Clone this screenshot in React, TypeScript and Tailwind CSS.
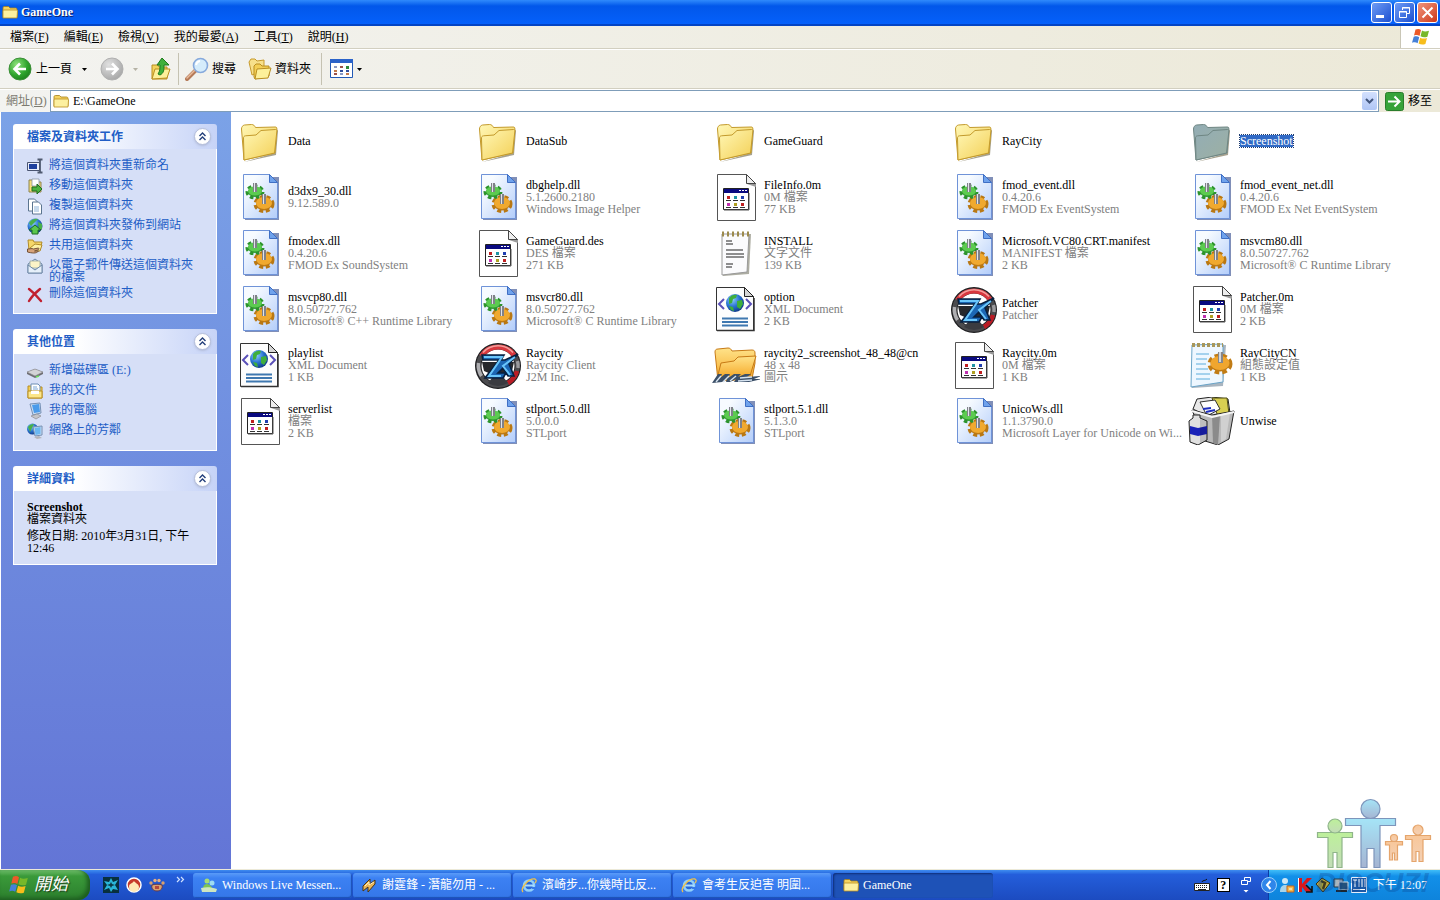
import React, { useState } from 'react'

type IconKind =
  | 'folder'
  | 'folder-selected'
  | 'dll'
  | 'generic'
  | 'notepad'
  | 'xml'
  | 'wheel'
  | 'screenshot-icon'
  | 'config'
  | 'unwise'

interface FileEntry {
  name: string
  icon: IconKind
  details?: string[]
}

const files: FileEntry[] = [
  { name: 'Data', icon: 'folder' },
  { name: 'DataSub', icon: 'folder' },
  { name: 'GameGuard', icon: 'folder' },
  { name: 'RayCity', icon: 'folder' },
  { name: 'Screenshot', icon: 'folder-selected' },
  { name: 'd3dx9_30.dll', icon: 'dll', details: ['9.12.589.0'] },
  { name: 'dbghelp.dll', icon: 'dll', details: ['5.1.2600.2180', 'Windows Image Helper'] },
  { name: 'FileInfo.0m', icon: 'generic', details: ['0M 檔案', '77 KB'] },
  { name: 'fmod_event.dll', icon: 'dll', details: ['0.4.20.6', 'FMOD Ex EventSystem'] },
  { name: 'fmod_event_net.dll', icon: 'dll', details: ['0.4.20.6', 'FMOD Ex Net EventSystem'] },
  { name: 'fmodex.dll', icon: 'dll', details: ['0.4.20.6', 'FMOD Ex SoundSystem'] },
  { name: 'GameGuard.des', icon: 'generic', details: ['DES 檔案', '271 KB'] },
  { name: 'INSTALL', icon: 'notepad', details: ['文字文件', '139 KB'] },
  { name: 'Microsoft.VC80.CRT.manifest', icon: 'dll', details: ['MANIFEST 檔案', '2 KB'] },
  { name: 'msvcm80.dll', icon: 'dll', details: ['8.0.50727.762', 'Microsoft® C Runtime Library'] },
  { name: 'msvcp80.dll', icon: 'dll', details: ['8.0.50727.762', 'Microsoft® C++ Runtime Library'] },
  { name: 'msvcr80.dll', icon: 'dll', details: ['8.0.50727.762', 'Microsoft® C Runtime Library'] },
  { name: 'option', icon: 'xml', details: ['XML Document', '2 KB'] },
  { name: 'Patcher', icon: 'wheel', details: ['Patcher'] },
  { name: 'Patcher.0m', icon: 'generic', details: ['0M 檔案', '2 KB'] },
  { name: 'playlist', icon: 'xml', details: ['XML Document', '1 KB'] },
  { name: 'Raycity', icon: 'wheel', details: ['Raycity Client', 'J2M Inc.'] },
  { name: 'raycity2_screenshot_48_48@cn', icon: 'screenshot-icon', details: ['48 x 48', '圖示'] },
  { name: 'Raycity.0m', icon: 'generic', details: ['0M 檔案', '1 KB'] },
  { name: 'RayCityCN', icon: 'config', details: ['組態設定值', '1 KB'] },
  { name: 'serverlist', icon: 'generic', details: ['檔案', '2 KB'] },
  { name: 'stlport.5.0.dll', icon: 'dll', details: ['5.0.0.0', 'STLport'] },
  { name: 'stlport.5.1.dll', icon: 'dll', details: ['5.1.3.0', 'STLport'] },
  { name: 'UnicoWs.dll', icon: 'dll', details: ['1.1.3790.0', 'Microsoft Layer for Unicode on Wi...'] },
  { name: 'Unwise', icon: 'unwise' }
]

const menus = [
  { label: '檔案', hotkey: 'F' },
  { label: '編輯', hotkey: 'E' },
  { label: '檢視', hotkey: 'V' },
  { label: '我的最愛', hotkey: 'A' },
  { label: '工具', hotkey: 'T' },
  { label: '說明', hotkey: 'H' }
]

// Gradients shared by every icon on the page
function IconDefs() {
  return (
    <svg className="absolute h-0 w-0" aria-hidden="true">
      <defs>
        <linearGradient id="folder" x1="0" y1="0" x2="1" y2="1">
          <stop offset="0" stopColor="#fff7b5" />
          <stop offset="1" stopColor="#f3cf55" />
        </linearGradient>
        <linearGradient id="folderSel" x1="0" y1="0" x2="1" y2="1">
          <stop offset="0" stopColor="#93adb5" />
          <stop offset="1" stopColor="#9db0a2" />
        </linearGradient>
        <linearGradient id="dllPage" x1="0" y1="0" x2="1" y2="1">
          <stop offset="0.2" stopColor="#f7fbff" />
          <stop offset="1" stopColor="#b3cdfa" />
        </linearGradient>
        <linearGradient id="orange" x1="0" y1="0" x2="0" y2="1">
          <stop offset="0" stopColor="#ffe38a" />
          <stop offset="1" stopColor="#f5a623" />
        </linearGradient>
        <radialGradient id="globe" cx="0.35" cy="0.3" r="0.8">
          <stop offset="0" stopColor="#8fd0ff" />
          <stop offset="0.5" stopColor="#2a74d0" />
          <stop offset="1" stopColor="#0b2f7a" />
        </radialGradient>
        <radialGradient id="greenBall" cx="0.35" cy="0.3" r="0.8">
          <stop offset="0" stopColor="#8fe27c" />
          <stop offset="0.6" stopColor="#2fa52d" />
          <stop offset="1" stopColor="#1b7c1b" />
        </radialGradient>
        <radialGradient id="greyBall" cx="0.35" cy="0.3" r="0.8">
          <stop offset="0" stopColor="#e0e0e0" />
          <stop offset="1" stopColor="#a3a3a3" />
        </radialGradient>
        <linearGradient id="personBlue" x1="0" y1="0" x2="0" y2="1">
          <stop offset="0" stopColor="#a5e4f7" />
          <stop offset="1" stopColor="#a5b4d2" />
        </linearGradient>
        <linearGradient id="personGreen" x1="0" y1="0" x2="0" y2="1">
          <stop offset="0" stopColor="#bdf09a" />
          <stop offset="1" stopColor="#c3dcb8" />
        </linearGradient>
        <linearGradient id="personOrange" x1="0" y1="0" x2="0" y2="1">
          <stop offset="0" stopColor="#f8c79a" />
          <stop offset="1" stopColor="#f3d0b5" />
        </linearGradient>
      </defs>
    </svg>
  )
}

function Gears() {
  return (
    <g>
      <ellipse cx="19" cy="19" rx="7" ry="5" fill="#2f9a30" />
      <ellipse cx="19" cy="19" rx="7" ry="5" fill="none" stroke="#2c932d" strokeWidth="5" strokeDasharray="3.200 2.200" />
      <ellipse cx="19" cy="18" rx="7" ry="4.500" fill="#5ccb50" />
      <ellipse cx="28" cy="31" rx="8" ry="6.500" fill="#c07c16" />
      <ellipse cx="28" cy="31" rx="8" ry="6.500" fill="none" stroke="#b97813" strokeWidth="5" strokeDasharray="3.600 2.400" />
      <ellipse cx="28" cy="30" rx="8" ry="6" fill="#f0a92f" />
      <path d="M17 10h4v9h-4zM26 21h4v10h-4z" fill="#7f8188" />
      <path d="M18 10h1v9h-1zM27 21h1v10h-1z" fill="#e2e4ea" />
    </g>
  )
}

function FolderShape({ fill, stroke }: { fill: string; stroke: string }) {
  return (
    <g strokeLinejoin="round">
      <path d="M8 45 40 38l2-24-1-2-2 24z" fill="#6b6242" opacity="0.6" />
      <path d="M5.500 12c0-2 1-3.500 3-4l7-.5c2 0 3 1 4 3L39 10c1.500 0 2 .5 1.800 2L39 36 8 43z" fill={fill} stroke={stroke} />
      <path d="M8 43 7.500 21c0-1 .5-2 2-2.200L20 18l5-4.500 14.500-1c1 0 1.500.5 1.400 1.500L38.500 36z" fill={fill} stroke={stroke} />
    </g>
  )
}

function FileIcon({ kind }: { kind: IconKind }) {
  return (
    <svg viewBox="0 0 48 48" className="h-12 w-12 shrink-0" aria-hidden="true">
      {kind === 'folder' && <FolderShape fill="url(#folder)" stroke="#c39a2c" />}
      {kind === 'folder-selected' && <FolderShape fill="url(#folderSel)" stroke="#6f8683" />}
      {kind === 'dll' && (
        <g>
          <path d="M9 4h34v43H9z" fill="#4a5f9a" opacity="0.7" />
          <path d="M7.500 1.500h26l8 8v36h-34z" fill="url(#dllPage)" stroke="#6f93d8" />
          <path d="M33.500 1.500v8h8z" fill="#6fa2ec" stroke="#3f6fc4" />
          <Gears />
        </g>
      )}
      {kind === 'generic' && (
        <g>
          <path d="M5.500 1.500h29l9 9v37h-38z" fill="#fff" stroke="#555" />
          <path d="M34.500 1.500v9h9z" fill="#eee" stroke="#444" />
          <path d="M35 11h9v3z" fill="#999" />
          <path d="M11.500 15.500h25v21h-25z" fill="#fff" stroke="#222" />
          <path d="M12 16h24v4H12z" fill="#0a0a80" />
          <path d="M27 17h2v1h-2zM30 17h2v1h-2zM33 17h2v1h-2z" fill="#fff" />
          <path d="M12 37h25v-17" fill="none" stroke="#555" />
          <path d="M15 23h3v3h-3z" fill="#c02020" />
          <path d="M22 23h3v3h-3z" fill="#1f95a5" />
          <path d="M29 23h3v3h-3z" fill="#203fb0" />
          <path d="M15 30h3v3h-3z" fill="#c030b0" />
          <path d="M22 30h3v3h-3z" fill="#b0a020" />
          <path d="M29 30h3v3h-3z" fill="#c02020" />
          <path d="M14 27.500h5M21 27.500h5M28 27.500h5M14 34.500h5M21 34.500h5M28 34.500h5" stroke="#333" />
        </g>
      )}
      {kind === 'notepad' && (
        <g>
          <path d="m11 6 28-1-2 40-26 2z" fill="#8a8a7a" opacity="0.7" />
          <path d="M10 5h27l-2 38-25 3z" fill="#fbfbfd" stroke="#9a9a9a" />
          <path d="M10 5h27" stroke="#9c8a4c" strokeWidth="5" strokeDasharray="2 3" />
          <path d="M14 12h6M14 15h7M14 21h17M14 25h18M14 28h18M14 35h7M14 38h6" stroke="#222" strokeWidth="1.200" />
        </g>
      )}
      {kind === 'xml' && (
        <g>
          <path d="M4.500 2.500h28l9 9v34h-37z" fill="#fdfdfd" stroke="#333" />
          <path d="M32.500 2.500v9h9z" fill="#d5d5d5" stroke="#222" />
          <path d="M5 45.500h37V13" fill="none" stroke="#333" strokeWidth="1.500" />
          <circle cx="23" cy="18" r="9" fill="url(#globe)" />
          <path d="M17 13c2-3 6-4 8-3l-1 3-3 1-1 4-3 1zM25 16l5-1 1 4-3 5-3-2zM17 21l4 1 1 4-3-1z" fill="#3fae3c" />
          <path d="m12 14-5 5 5 5M34 14l5 5-5 5" fill="none" stroke="#5a50b8" strokeWidth="2" />
          <path d="M10 33.500h26M10 37h26M10 40.500h26" stroke="#3f78b0" strokeWidth="2" />
        </g>
      )}
      {kind === 'wheel' && (
        <g>
          <circle cx="24" cy="25" r="23" fill="#1c1c1e" />
          <circle cx="24" cy="25" r="16.500" fill="#fff" />
          <circle cx="24" cy="25" r="19.500" fill="none" stroke="#4b4b4e" strokeWidth="4.500" />
          <path d="M7.500 15a19.500 19.500 0 0 1 33 0" fill="none" stroke="#d8383e" strokeWidth="5" />
          <path d="M9 11.500a20 20 0 0 1 30 0" fill="none" stroke="#f3a09c" strokeWidth="1.500" />
          <path d="M43 30a19.500 19.500 0 0 1-9 12" fill="none" stroke="#bb1c25" strokeWidth="4.500" />
          <path d="M4.500 22a19.500 19.500 0 0 0 3 13" fill="none" stroke="#aeaeb1" strokeWidth="3.500" />
          <path d="M43.500 20a19.500 19.500 0 0 1 .5 7" fill="none" stroke="#9a9a9d" strokeWidth="3.500" />
          <path d="M8 21h32l-2 9-7 3-2 9H19l-2-9-7-3z" fill="#26282c" />
          <path d="M14 42a20 20 0 0 0 20 0l-4-5H18z" fill="#3a3b40" />
          <path d="M8 14h22l-3 5h4l13-6-9 10 5 12h-6l-5-8-5 5h8l-3 5H11l14-18H9z" fill="#1c67b4" stroke="#07203f" strokeWidth="1.600" />
          <path d="M10 16h18L15 35h12M41 16 29 25l7 9" fill="none" stroke="#6ac6fa" strokeWidth="2" />
        </g>
      )}
      {kind === 'screenshot-icon' && (
        <g strokeLinejoin="round">
          <path d="M3 11c0-2 1-3 3-3l10-1c2 0 3 1 4 3l20-1c2 0 3 1 3 3v10L40 38 6 40z" fill="url(#orange)" stroke="#c77a15" />
          <path d="m5 38 4-16 13-2 4-4 18-1-6 20z" fill="url(#orange)" stroke="#c77a15" />
          <path d="m0 42 6-9h4l-2 4 5-4h5l-2 4 6-4h7l-3 3 7-3h6l-4 3 14-1-7 3h8l-13 3H22l2-3-6 3h-4l1-3-5 3z" fill="#3b4f68" />
          <path d="m4 41 5-6M11 41l6-6M18 40l6-5M28 37l12-1M26 40l14-1" stroke="#d5e2ef" strokeWidth="1.400" />
        </g>
      )}
      {kind === 'config' && (
        <g>
          <path d="m4 5 34-1-3 41-31 2z" fill="#6f8496" opacity="0.6" />
          <path d="m4 4 31-1v38L3 46z" fill="#eef7ff" stroke="#6aa4c8" />
          <path d="M4 4h31" stroke="#a8975a" strokeWidth="4" strokeDasharray="3 2" />
          <path d="M8 13h13M8 18h11M8 23h10M8 28h12M8 33h14M8 38h14" stroke="#5bacdc" />
          <ellipse cx="32" cy="23" rx="9.500" ry="7.500" fill="#bf7a14" />
          <ellipse cx="32" cy="23" rx="9.500" ry="7.500" fill="none" stroke="#c17c15" strokeWidth="6" strokeDasharray="4.200 2.800" />
          <ellipse cx="32" cy="22" rx="9.500" ry="7" fill="#f0a62f" />
          <path d="M30 11h5v11h-5z" fill="#85878c" />
          <path d="M31 11h2v10h-2z" fill="#d5d7dc" />
        </g>
      )}
      {kind === 'unwise' && (
        <g strokeLinejoin="round">
          <path d="m5 12 4-10 15-2 16 2 2 14-17 6z" fill="#e8e8e8" stroke="#222" />
          <path d="M24 1h15l2 16-11 3z" fill="#d8cf52" stroke="#4d4a10" />
          <path d="m12 5 15-2 5 9-13 7z" fill="#fff" stroke="#333" />
          <path d="m15 12 8-1M18 15l9-2" stroke="#2030c0" strokeWidth="2" />
          <path d="m4 13 20 5 22-4-5 28-11 6-13-4z" fill="#b9b9b9" stroke="#222" />
          <path d="m24 18 1 28 5 2 2-30z" fill="#8b8b8b" />
          <path d="m33 18 9-2-4 26-5 3z" fill="#d0d0d0" />
          <path d="m4 14 20 6 22-5" fill="none" stroke="#f6f6f6" strokeWidth="2" />
          <path d="m1 24 4-3v-3h7v3l7 3v19l-9 5-8-3z" fill="#e0e0e0" stroke="#222" />
          <path d="m2 29 8 2 9-2v8l-9 2-8-2z" fill="#1a22b8" />
          <path d="M12 22v25l7-4V24z" fill="#000" opacity="0.15" />
        </g>
      )}
    </svg>
  )
}

function SmallFolder() {
  return (
    <svg viewBox="0 0 16 16" className="h-4 w-4 shrink-0" aria-hidden="true">
      <path d="M1 4c0-1 .5-1.500 1.500-1.500h4L8 4h5.500c.8 0 1.500.5 1.500 1.500V13H1z" fill="#f5d360" stroke="#a47d17" strokeWidth="0.800" />
      <path d="M1 14V7c0-.6.400-1 1-1h12.500c.6 0 1 .4 1 1L15 14z" fill="#fdf0a0" stroke="#b98e20" strokeWidth="0.800" />
    </svg>
  )
}

function WindowsFlag({ className }: { className: string }) {
  return (
    <svg viewBox="0 0 20 18" className={className} aria-hidden="true">
      <path d="M4.500 1.500C7 .5 8.500.8 10 2L8.500 8C7 7 5.500 6.800 3 7.600z" fill="#ec5a29" />
      <path d="M11 2.500c2 1.200 4 1.200 7 .2l-1.600 6c-2.600 1-4.600.8-6.900-.4z" fill="#77b82a" />
      <path d="M2.700 8.800C5 8 6.800 8.200 8.200 9.200l-1.600 6C5 14.200 3.500 14 1 14.800z" fill="#4580d8" />
      <path d="M9.200 9.700c2 1.100 4.200 1.200 6.800.3l-1.600 6c-2.600.9-4.700.7-6.800-.5z" fill="#f7bd1b" />
    </svg>
  )
}

function DownArrow({ className }: { className: string }) {
  return (
    <svg viewBox="0 0 5 3" className={className} aria-hidden="true">
      <path d="M0 0h5L2.500 3z" fill="currentColor" />
    </svg>
  )
}

function TitleBar() {
  return (
    <header className="flex h-[26px] items-center bg-linear-to-b from-[#2f8afc] via-[#0257ea] via-25% to-[#0560fb] border-b-2 border-[#0344c4] pl-[2px] pr-[2px]">
      <SmallFolder />
      <h1 className="ml-[3px] flex-1 text-[12px] leading-4 font-bold text-white [text-shadow:1px_1px_0_#0a1f66]">GameOne</h1>
      <div className="flex gap-[2px]">
        <button aria-label="最小化" className="h-[21px] w-[21px] rounded-[3px] border border-white bg-linear-to-br from-[#6f9bf5] to-[#1c4fd0]">
          <svg viewBox="0 0 19 19" className="h-full w-full">
            <path d="M4 12h8v3H4z" fill="#fff" />
          </svg>
        </button>
        <button aria-label="還原" className="h-[21px] w-[21px] rounded-[3px] border border-white bg-linear-to-br from-[#6f9bf5] to-[#1c4fd0]">
          <svg viewBox="0 0 19 19" className="h-full w-full" fill="none" stroke="#fff">
            <path d="M7.500 7V4.500h7v6H12M7 5h8" />
            <path d="M4.500 8.500h7v6h-7zM4 9h8" />
          </svg>
        </button>
        <button aria-label="關閉" className="h-[21px] w-[21px] rounded-[3px] border border-white bg-linear-to-br from-[#f0937a] to-[#cc3512]">
          <svg viewBox="0 0 19 19" className="h-full w-full" stroke="#fff" strokeWidth="2">
            <path d="m4.500 4.500 10 10M14.500 4.500l-10 10" />
          </svg>
        </button>
      </div>
    </header>
  )
}

function MenuBar() {
  return (
    <div className="flex h-[23px] items-stretch border-b border-[#d2cfc0]">
      <nav className="flex flex-1 items-center gap-[15px] pl-[10px]">
        {menus.map((menu) => (
          <button key={menu.hotkey} className="text-[12px] leading-4">
            {menu.label}(<u>{menu.hotkey}</u>)
          </button>
        ))}
      </nav>
      <div className="flex w-10 items-center justify-center border-l border-[#c9c6b6] bg-white">
        <WindowsFlag className="h-[18px] w-5" />
      </div>
    </div>
  )
}

function ToolBar() {
  return (
    <div className="flex h-10 items-center border-t border-b border-t-white border-b-[#d2cfc0] pl-2 text-[12px] leading-4">
      <button className="flex items-center gap-1">
        <svg viewBox="0 0 24 24" className="h-6 w-6">
          <circle cx="12" cy="12" r="11" fill="url(#greenBall)" stroke="#3c8f38" />
          <path d="M18 12H7M12 6.500 6.500 12l5.500 5.500" fill="none" stroke="#fff" strokeWidth="2.600" />
        </svg>
        上一頁
      </button>
      <button aria-label="上一頁清單" className="ml-[9px] p-px">
        <DownArrow className="h-[3px] w-[5px]" />
      </button>
      <button aria-label="下一頁" className="ml-3">
        <svg viewBox="0 0 24 24" className="h-6 w-6">
          <circle cx="12" cy="12" r="11" fill="url(#greyBall)" stroke="#b0b0b0" />
          <path d="M6 12h11M12 6.500l5.500 5.500-5.500 5.500" fill="none" stroke="#fff" strokeWidth="2.600" />
        </svg>
      </button>
      <button aria-label="下一頁清單" className="ml-2 p-px text-[#b5b2a5]">
        <DownArrow className="h-[3px] w-[5px]" />
      </button>
      <button aria-label="上移一層" className="ml-[10px]">
        <svg viewBox="0 0 24 24" className="h-6 w-6">
          <path d="M3 8h6l1 2h8v12H3z" fill="#f3d25c" stroke="#b98e20" />
          <path d="m3 22 3-10h15l-3 9z" fill="#fdf09a" stroke="#b98e20" />
          <path d="M11 18c4-2 4-5 4-10h5L13 1 8 8h3c0 4 0 6-2 9z" fill="#3fb03a" stroke="#1c7a1c" />
        </svg>
      </button>
      <div className="ml-[5px] h-8 w-px bg-[#c5c2b2]" />
      <button className="ml-[6px] flex items-center gap-[3px]">
        <svg viewBox="0 0 24 24" className="h-6 w-6">
          <path d="m11 13-9 9" stroke="#b57a58" strokeWidth="4" strokeLinecap="round" />
          <path d="m10 13-8 8" stroke="#e9bb9b" strokeWidth="1.500" strokeLinecap="round" />
          <circle cx="15.500" cy="8.500" r="7" fill="#d5ecfb" stroke="#86a9dc" strokeWidth="1.600" />
          <path d="M11 8a5 5 0 0 1 4-4" fill="none" stroke="#fff" strokeWidth="2" />
        </svg>
        搜尋
      </button>
      <button className="ml-3 flex items-center gap-[3px]">
        <svg viewBox="0 0 24 24" className="h-6 w-6" strokeLinejoin="round">
          <path d="M1 5 3 2h4l2 2 7-1v10L4 18z" fill="#f7e08a" stroke="#c79a2b" />
          <path d="M6 20V9l2-2h4l2 2h7v10L7 22z" fill="#f3cf55" stroke="#b98e20" />
          <path d="m7 22 2-10 14-1-3 10z" fill="#fdf09a" stroke="#b98e20" />
        </svg>
        資料夾
      </button>
      <div className="ml-[10px] h-8 w-px bg-[#c5c2b2]" />
      <button aria-label="檢視方式" className="ml-2 flex items-center gap-[3px]">
        <svg viewBox="0 0 24 20" className="h-5 w-6">
          <path d="M.5.500h22v18H.5z" fill="#fff" stroke="#2259b5" />
          <path d="M0 0h23v4H0z" fill="#2a63c9" />
          <path d="M4 7h3v2H4zM10 14h3v2h-3z" fill="#8a9ac4" />
          <path d="M10 7h3v2h-3zM4 14h3v2H4z" fill="#9c5148" />
          <path d="M16 7h3v3h-3z" fill="#2f8a38" />
          <path d="M4 11h3v2H4zM16 14h3v2h-3z" fill="#c27a4a" />
          <path d="M10 11h3v2h-3zM16 11h3v2h-3z" fill="#334f9c" />
        </svg>
        <DownArrow className="h-[3px] w-[5px]" />
      </button>
    </div>
  )
}

function AddressBar() {
  const [path, setPath] = useState('E:\\GameOne')

  return (
    <div className="flex h-[23px] items-center border-t border-white text-[12px] leading-4">
      <label htmlFor="address" className="w-[50px] pl-[6px] text-[#7d7b70]">
        網址(<u>D</u>)
      </label>
      <div className="flex h-[22px] flex-1 items-center border border-[#7f9db9] bg-white pl-[2px] pr-px">
        <SmallFolder />
        <input
          id="address"
          value={path}
          onChange={(e) => setPath(e.target.value)}
          className="ml-1 min-w-0 flex-1 bg-transparent outline-none"
        />
        <button aria-label="網址清單" className="flex h-[18px] w-[15px] items-center justify-center rounded-[2px] bg-linear-to-b from-[#d3e0fd] to-[#b0c6f5]">
          <svg viewBox="0 0 9 6" className="h-[6px] w-[9px]" fill="none" stroke="#42567d" strokeWidth="2">
            <path d="m1 1 3.500 3.500L8 1" />
          </svg>
        </button>
      </div>
      <button className="ml-[6px] mr-2 flex items-center gap-1">
        <svg viewBox="0 0 19 19" className="h-[19px] w-[19px]">
          <path d="M.5 2.500q0-2 2-2h14q2 0 2 2v14q0 2-2 2h-14q-2 0-2-2z" fill="#36a339" stroke="#2a7d2c" />
          <path d="M3 9.500h11M9.500 4.500l5 5-5 5" fill="none" stroke="#fff" strokeWidth="2" />
        </svg>
        移至
      </button>
    </div>
  )
}

interface TaskItem {
  label: string
  icon: React.ReactNode
}

const folderTasks: TaskItem[] = [
  {
    label: '將這個資料夾重新命名',
    icon: (
      <g>
        <path d="M.5 5.500h12v8H.5z" fill="#e9eefb" stroke="#4a5572" />
        <path d="M2 7h8v5H2z" fill="#1d3f9d" />
        <path d="M10.500 2.500h5M13 2.500v13M10.500 15.500h5" stroke="#4f5a70" strokeWidth="1.800" />
      </g>
    )
  },
  {
    label: '移動這個資料夾',
    icon: (
      <g>
        <path d="M2 3h5l1 2h6v10H2z" fill="#f3dc7a" stroke="#8d8451" />
        <path d="M5 2h7v7H5z" fill="#fff" stroke="#8b96a5" strokeWidth="0.800" />
        <path d="M5 10h5V7l5 5-5 5v-3H5z" fill="#4cb23e" stroke="#216d20" />
      </g>
    )
  },
  {
    label: '複製這個資料夾',
    icon: (
      <g fill="#fff" stroke="#5b7590">
        <path d="M1.500 2h6l3 3v9h-9z" />
        <path d="M5.500 5h6l3 3v9h-9z" />
        <path d="M7 10h5M7 12h5M7 14h5" stroke="#90b4d8" />
      </g>
    )
  },
  {
    label: '將這個資料夾發佈到網站',
    icon: (
      <g>
        <circle cx="8" cy="9" r="7.500" fill="url(#globe)" />
        <path d="M2 6c2-4 7-5 9-4l-3 3-4 4zM11 5l4 2v5l-3 1z" fill="#49b04a" />
        <path d="m8 8 6 5h-3v4H5v-4H2z" fill="#5ac74c" stroke="#1f6b24" />
      </g>
    )
  },
  {
    label: '共用這個資料夾',
    icon: (
      <g>
        <path d="M1 3h5l1 2h8l-2 8H2z" fill="#f5d76a" stroke="#b08a28" />
        <path d="m3 11 5-4 7 1-2 6H3z" fill="#fdf1a5" stroke="#b08a28" />
        <path d="M.5 12c3 0 4-1 6 0l5-1c1 1 0 2-1 2l-3 1h4c-2 3-7 2-11 1z" fill="#d8a47b" stroke="#735237" />
      </g>
    )
  },
  {
    label: '以電子郵件傳送這個資料夾的檔案',
    icon: (
      <g>
        <path d="m1 7 7-5 7 5v9H1z" fill="#cfdff0" stroke="#6e88a6" />
        <path d="M3 4h10v7H3z" fill="#fbf3c7" stroke="#9aa6a0" strokeWidth="0.800" />
        <path d="m1 8 7 5 7-5v8H1z" fill="#e6f0fa" stroke="#6e88a6" />
      </g>
    )
  },
  {
    label: '刪除這個資料夾',
    icon: <path d="M2 4c4 3 8 7 12 12M13 4C8 8 5 11 2 16" fill="none" stroke="#c0202f" strokeWidth="2.400" strokeLinecap="round" />
  }
]

const otherPlaces: TaskItem[] = [
  {
    label: '新增磁碟區 (E:)',
    icon: (
      <g>
        <path d="m0 10 8-3 8 3v2l-8 4-8-4z" fill="#6d6d72" />
        <path d="m0 10 8-3 8 3-8 4z" fill="#d3d3d6" stroke="#8a8a8e" strokeWidth="0.600" />
        <path d="m9 15 3-1" stroke="#6ee05f" strokeWidth="1.500" />
      </g>
    )
  },
  {
    label: '我的文件',
    icon: (
      <g>
        <path d="M1 4h5l1 1h8v11H1z" fill="#f3cf55" stroke="#b98e20" />
        <path d="M4 2h7l2 2v8H4z" fill="#fff" stroke="#6c8db5" />
        <path d="M6 5h4M6 7h5" stroke="#7aa6d8" />
        <path d="M1 16V9h14v7z" fill="#fbe68a" stroke="#b98e20" />
        <path d="M4 9h8v3H4z" fill="#fff" />
      </g>
    )
  },
  {
    label: '我的電腦',
    icon: (
      <g>
        <path d="m3 2 10-1 1 10-8 2z" fill="#c9dcf2" stroke="#7590b4" />
        <path d="m5 3 7-1 1 8-6 1z" fill="#4a9bea" />
        <path d="m4 14 6-2 4 2-5 3z" fill="#c4c4c8" stroke="#8c8c92" strokeWidth="0.700" />
      </g>
    )
  },
  {
    label: '網路上的芳鄰',
    icon: (
      <g>
        <circle cx="5.500" cy="7" r="5.500" fill="url(#globe)" />
        <path d="M1 5c2-3 5-3 6-3L5 6l-2 4z" fill="#49b04a" />
        <path d="m6 5 9-1v9l-7 1z" fill="#c9dcf2" stroke="#7590b4" />
        <path d="m7.500 6 6-1v7l-5 1z" fill="#6bb8f2" />
        <path d="m7 15 5-1 3 2-5 1z" fill="#b5b5ba" />
      </g>
    )
  }
]

function SidePanel({ title, children }: { title: string; children: React.ReactNode }) {
  const [open, setOpen] = useState(true)

  return (
    <section>
      <div className="flex h-[25px] items-center rounded-t-[3px] bg-linear-to-r from-white from-30% to-[#c6d3f7] pl-[14px] pr-[6px]">
        <h2 className="flex-1 text-[12px] leading-4 font-bold text-[#215dc6]">{title}</h2>
        <button
          aria-label={title}
          aria-expanded={open}
          onClick={() => setOpen(!open)}
          className="h-[17px] w-[17px] rounded-full border border-[#b5bfdc] bg-white shadow-sm"
        >
          <svg viewBox="0 0 15 15" className="h-full w-full" fill="none" stroke="#243f7a" strokeWidth="1.400">
            <path d="m4.500 7 3-3 3 3M4.500 11l3-3 3 3" />
          </svg>
        </button>
      </div>
      {open && <div className="border border-t-0 border-white bg-[#d6dff7] px-[13px] pb-[10px]">{children}</div>}
    </section>
  )
}

function TaskList({ items }: { items: TaskItem[] }) {
  return (
    <ul className="flex flex-col gap-[2px] pt-2">
      {items.map((item) => (
        <li key={item.label}>
          <a href="#" className="flex min-h-[18px] items-start gap-1 text-[#215dc6] hover:underline">
            <svg viewBox="0 0 18 18" className="h-[18px] w-[18px] shrink-0" aria-hidden="true">
              {item.icon}
            </svg>
            <span className="pt-[2px] text-[12px] leading-3">{item.label}</span>
          </a>
        </li>
      ))}
    </ul>
  )
}

function SideBar() {
  return (
    <aside className="flex w-[231px] shrink-0 flex-col gap-[15px] border-l border-white bg-linear-to-b from-[#7ba2e7] to-[#6375d6] pt-3 pl-3 pr-[14px]">
      <SidePanel title="檔案及資料夾工作">
        <TaskList items={folderTasks} />
      </SidePanel>
      <SidePanel title="其他位置">
        <TaskList items={otherPlaces} />
      </SidePanel>
      <SidePanel title="詳細資料">
        <div className="flex flex-col gap-[5px] pt-[10px] text-[12px] leading-3">
          <p>
            <b>Screenshot</b>
            <br />
            檔案資料夾
          </p>
          <p>修改日期: 2010年3月31日, 下午 12:46</p>
        </div>
      </SidePanel>
    </aside>
  )
}

function FileGrid() {
  const [selected, setSelected] = useState('Screenshot')

  return (
    <main className="relative min-w-0 flex-1 bg-white pt-px pl-[5px]">
      <ul className="grid grid-cols-[repeat(auto-fill,238px)]">
        {files.map((file) => (
          <li key={file.name}>
            <button
              onClick={() => setSelected(file.name)}
              className="flex h-14 w-full items-center gap-1 text-left text-[12px] leading-3"
            >
              <FileIcon kind={file.icon} />
              <span className="flex flex-col items-start whitespace-nowrap">
                <span
                  className={
                    selected === file.name
                      ? 'bg-[#316ac5] text-white outline-1 outline-dotted outline-[#1b3a70]'
                      : 'text-black'
                  }
                >
                  {file.name}
                </span>
                {file.details?.map((line) => (
                  <span key={line} className="text-[#808080]">
                    {line}
                  </span>
                ))}
              </span>
            </button>
          </li>
        ))}
      </ul>
      <Watermark />
    </main>
  )
}

// Logo figures stand on the taskbar, the word runs across the tray
function Watermark() {
  return (
    <div className="pointer-events-none absolute right-[6px] -bottom-7 z-10" aria-hidden="true">
      <svg viewBox="0 0 118 72" className="h-[72px] w-[118px]" strokeWidth="1.200">
        <g fill="url(#personGreen)" stroke="#8fb58a">
          <path d="M1.500 35.500h35v5h-10.500v30h-5v-15h-4v15h-5v-30H1.500z" />
          <circle cx="19" cy="29" r="7" />
        </g>
        <g fill="url(#personBlue)" stroke="#7d95bb">
          <path d="M29.500 21.500h50v7H64v42h-6v-19h-7v19h-6v-42H29.500z" />
          <circle cx="54.500" cy="12" r="9.500" />
        </g>
        <g fill="url(#personOrange)" stroke="#e5a56c">
          <path d="M69.500 44.500h17v3.500h-5v15h-3v-7h-2v7h-3V48h-4z" />
          <circle cx="78" cy="41" r="3.500" />
          <path d="M89.500 38.500h25v4h-7.500v22h-4v-10h-3v10h-4v-22h-6.500z" />
          <circle cx="102" cy="33" r="5" />
        </g>
      </svg>
      <p className="font-['Liberation_Sans',sans-serif] text-[28px] leading-7 font-bold italic text-[#0a3f8a]/30">DISCUZ!</p>
    </div>
  )
}

function IeIcon() {
  return (
    <g>
      <circle cx="8" cy="8.500" r="5" fill="#2767d8" stroke="#8fd0fb" strokeWidth="2.600" />
      <path d="M4 8.500h9" stroke="#a9dcff" strokeWidth="2" />
      <path d="M11 10h5v2h-5z" fill="#3579ea" />
      <path d="M2 15C-1 12 7 1 14 2c2 1 1 3 0 4" fill="none" stroke="#f0c34a" strokeWidth="1.300" />
    </g>
  )
}

const windows = [
  {
    title: 'Windows Live Messen...',
    icon: (
      <g>
        <circle cx="6" cy="4" r="2.500" fill="#a6dc72" />
        <path d="M2 13c0-4 1-6 4-6s5 3 6 6z" fill="#7cc455" />
        <circle cx="11" cy="6" r="2.500" fill="#9edcf2" />
        <path d="M0 11c5-1 10-1 16 1l-1 3H1z" fill="#cfe6c0" />
      </g>
    )
  },
  {
    title: '謝霆鋒 - 潛龍勿用 - ...',
    icon: (
      <g strokeLinejoin="round">
        <path d="m2 9 7-7v5l5-4v4l-7 8v-5l-5 4z" fill="#e9b456" stroke="#4d3410" />
        <path d="m4 9 4-4v3l5-3" fill="none" stroke="#fff0c0" />
      </g>
    )
  },
  { title: '濱崎步...你幾時比反...', icon: <IeIcon /> },
  { title: '會考生反迫害 明圍...', icon: <IeIcon /> }
]

function TaskBar() {
  return (
    <footer className="flex h-[30px] items-stretch overflow-hidden bg-linear-to-b from-[#3f8cf0] via-[#245edb] via-15% to-[#1c4bc0] text-[12px] leading-4 text-white">
      <button className="flex w-[90px] shrink-0 items-center rounded-r-xl bg-linear-to-b from-[#6fbf6b] via-[#3a9a3a] via-20% to-[#2c7f2d] pl-2 text-[17px] leading-5 italic shadow-[inset_-3px_-2px_4px_#1d5c20] [text-shadow:1px_1px_1px_#1c3f1c]">
        <WindowsFlag className="mr-1 h-5 w-[22px]" />
        開始
      </button>
      <div className="flex shrink-0 items-center gap-[7px] pl-[13px]">
        <button aria-label="顯示桌面">
          <svg viewBox="0 0 16 16" className="h-4 w-4">
            <path d="M0 0h16v16H0z" fill="#08303e" />
            <path d="m8 1 2 4 5-2-3 5 3 5-5-1-2 3-2-4-5 2 3-5-3-4 5 1z" fill="#29b6d8" />
            <path d="m8 5 1 2 3 1-3 1-1 2-1-2-3-1 3-1z" fill="#0c3946" />
          </svg>
        </button>
        <button aria-label="瀏覽器">
          <svg viewBox="0 0 16 16" className="h-4 w-4">
            <circle cx="8" cy="8" r="7" fill="#c63a2b" stroke="#fff" strokeWidth="1.500" />
            <path d="M3 10c0-4 3-3 5-6 1 2 5 3 5 6a5 5 0 0 1-10 0z" fill="#ffe9b5" />
          </svg>
        </button>
        <button aria-label="寵物">
          <svg viewBox="0 0 16 16" className="h-4 w-4">
            <path d="M3 8c2-1 8-1 10 0 1 3-1 6-5 6s-6-3-5-6z" fill="#d9a06e" stroke="#5c3a52" />
            <circle cx="2" cy="6" r="1.700" fill="#d9a06e" />
            <circle cx="6" cy="3.500" r="1.700" fill="#e6b083" />
            <circle cx="10" cy="3.500" r="1.700" fill="#e6b083" />
            <circle cx="14" cy="6" r="1.700" fill="#d9a06e" />
            <path d="M6 9h4v3H6z" fill="#b3493f" />
          </svg>
        </button>
        <button aria-label="其他工具" className="mb-3 ml-1">
          <svg viewBox="0 0 9 7" className="h-[7px] w-[9px]" fill="none" stroke="#cfe0ff" strokeWidth="1.200">
            <path d="m1 1 2.500 2.500L1 6M5 1l2.500 2.500L5 6" />
          </svg>
        </button>
      </div>
      <div className="ml-2 flex min-w-0 flex-1 items-center gap-px">
        {windows.map((w) => (
          <button
            key={w.title}
            className="flex h-[25px] w-[159px] items-center gap-[5px] rounded-[3px] bg-linear-to-b from-[#5a9bf8] via-[#3c81f3] via-20% to-[#3577e8] pl-2 shadow-[inset_-1px_-1px_1px_#1c50b5]"
          >
            <svg viewBox="0 0 16 16" className="h-4 w-4 shrink-0" aria-hidden="true">
              {w.icon}
            </svg>
            <span className="truncate">{w.title}</span>
          </button>
        ))}
        <button className="flex h-[25px] w-[160px] items-center gap-1 rounded-[3px] bg-[#1e52b7] pl-[10px] shadow-[inset_1px_1px_2px_#0f2f78]">
          <SmallFolder />
          GameOne
        </button>
      </div>
      <div className="flex shrink-0 items-center pr-4">
        <button aria-label="鍵盤" className="mr-[7px]">
          <svg viewBox="0 0 16 16" className="h-4 w-4">
            <path d="M8 5c0-2 4-1 5-3" fill="none" stroke="#111" />
            <path d="M.5 6.500h15v7H.5z" fill="#fff" stroke="#222" />
            <path d="M2 8.500h12M2 10.500h12" stroke="#222" strokeDasharray="1 1" />
            <path d="M4 12.500h8" stroke="#222" />
          </svg>
        </button>
        <button aria-label="說明" className="mr-[10px] h-[14px] w-[13px] border border-black bg-white text-[12px] leading-3 font-bold text-black">
          ?
        </button>
        <button aria-label="語言列選項">
          <svg viewBox="0 0 12 20" className="h-5 w-3" fill="none" stroke="#fff">
            <path d="M4.500 5V2.500h6v4H8M1.500 5.500h6v4h-6z" />
            <path d="M3.500 15h5L6 17.500z" fill="#fff" stroke="none" />
          </svg>
        </button>
      </div>
      <div className="flex shrink-0 items-center gap-[2px] border-l border-[#0d3da5] bg-linear-to-b from-[#3fbdf8] via-[#1290e9] via-20% to-[#0e84dc] pr-[13px]">
        <button aria-label="顯示隱藏的圖示" className="-ml-2 h-4 w-4 rounded-full border border-[#9ad0fb] bg-[#2f86ea]">
          <svg viewBox="0 0 14 14" className="h-full w-full" fill="none" stroke="#fff" strokeWidth="2">
            <path d="M8.500 3 5 7l3.500 4" />
          </svg>
        </button>
        <svg viewBox="0 0 16 16" className="h-4 w-4" aria-hidden="true">
          <circle cx="6" cy="4" r="3" fill="#cfe8f5" />
          <path d="M1 15c0-5 2-7 5-7s5 2 5 7z" fill="#a9d4ea" />
          <path d="M8 9h7v6H8z" fill="#f6b94b" stroke="#c2631c" />
          <path d="M10 12h3" stroke="#fff" />
        </svg>
        <svg viewBox="0 0 16 16" className="h-4 w-4" aria-hidden="true">
          <path d="M1 1h4v14H1z" fill="#fff" />
          <path d="M2 1h3v6l5-6h5L8 8l7 7H9l-4-5v5H2z" fill="#d9171c" />
          <path d="m9 8 6 6M15 9v6H9" fill="none" stroke="#111" strokeWidth="1.600" />
        </svg>
        <svg viewBox="0 0 16 16" className="h-4 w-4" aria-hidden="true">
          <path d="m1 7 6-6 8 5-7 9z" fill="#b8a63c" stroke="#333016" />
          <path d="m6 4 4 2-2 6" fill="none" stroke="#3d3a20" strokeWidth="2.500" />
        </svg>
        <svg viewBox="0 0 16 16" className="h-4 w-4" aria-hidden="true">
          <path d="M1 2h9v8H1z" fill="#a9b5bd" stroke="#2d3840" />
          <path d="M6 5h9v8H6z" fill="#24527c" stroke="#cfd7db" />
          <path d="M3 14h11" stroke="#1b2630" strokeWidth="2" />
        </svg>
        <svg viewBox="0 0 16 16" className="h-4 w-4" aria-hidden="true">
          <path d="M.5.500h15v15H.5z" fill="#1c5aa8" stroke="#e6eefc" />
          <path d="M2 3h4M4 3v7M8 2v8M11 2v8M14 2v8M2 12.500h12" stroke="#fff" />
        </svg>
        <time className="ml-1 whitespace-nowrap">下午 12:07</time>
      </div>
    </footer>
  )
}

export default function App() {
  return (
    <div className="flex min-h-screen flex-col overflow-hidden bg-white font-['Liberation_Serif','Noto_Sans_CJK_TC',serif] text-black">
      <IconDefs />
      <TitleBar />
      <div className="bg-linear-to-r from-[#f3f3f0] to-[#ece9d8]">
        <MenuBar />
        <ToolBar />
        <AddressBar />
      </div>
      <div className="flex flex-1 items-stretch">
        <SideBar />
        <FileGrid />
      </div>
      <div className="h-px bg-[#ece9d8]" />
      <TaskBar />
    </div>
  )
}
